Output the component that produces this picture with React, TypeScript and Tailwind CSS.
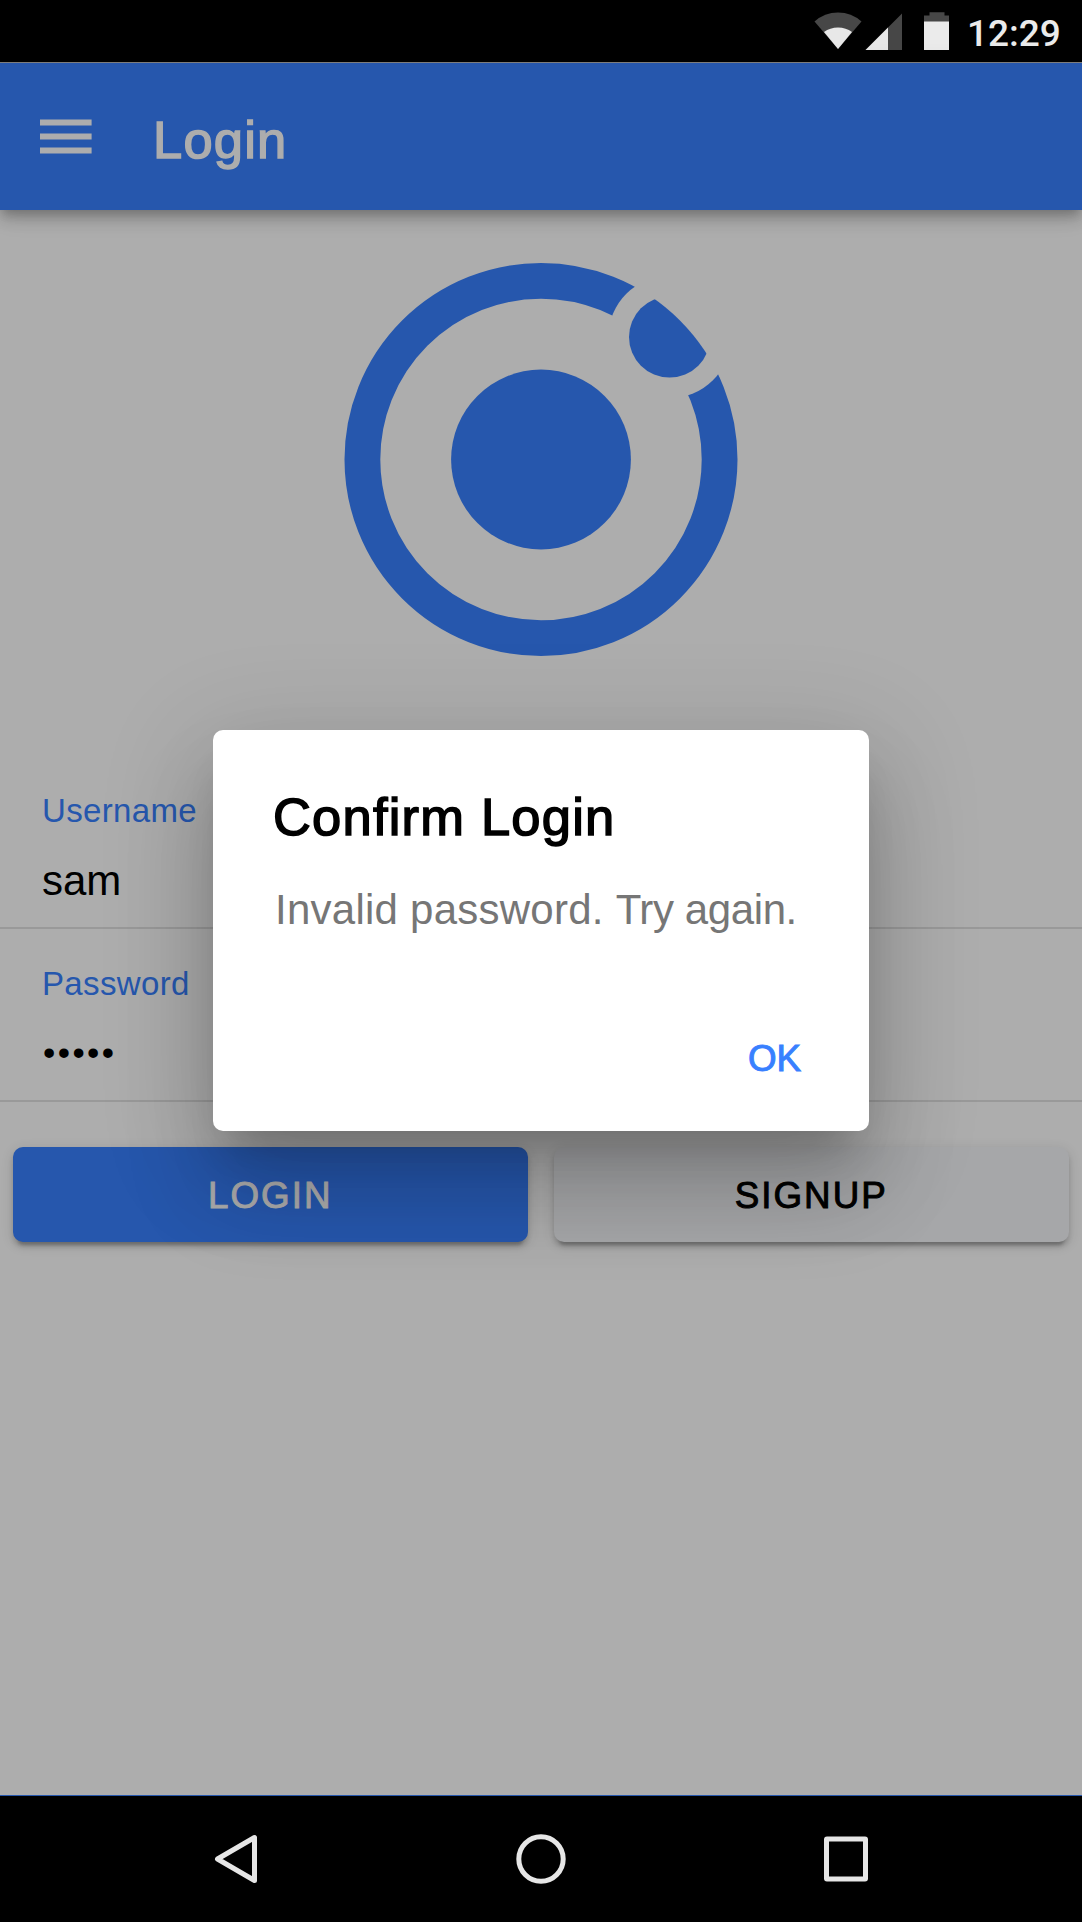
function StatusBar() {
  return (
    <div className="flex h-[62px] w-full items-start bg-black">
      <svg className="ml-auto h-[62px] w-[154px] shrink-0" viewBox="808 0 154 62">
        <path d="M838 49L814.500 21.500Q824.500 12.500 838 12.500Q851.500 12.500 861.500 21.500Z" fill="#474747" />
        <path d="M838 49L824 32Q830 27.500 838 27.500Q846 27.500 852 32Z" fill="#e8e8e8" />
        <path d="M865.500 50L902 13.500V50Z" fill="#474747" />
        <path d="M865.500 50L888 27.500V50Z" fill="#e8e8e8" />
        <path d="M924 15.500H929.500V12.300H944.500V15.500H949V22H924Z" fill="#474747" />
        <path d="M924 21.500H949V50H924Z" fill="#ebebeb" />
      </svg>
      <span className="mt-[9px] w-[120px] pl-[5px] font-['Roboto'] text-[37px] leading-[50px] font-medium text-[#ebebeb]">12:29</span>
    </div>
  );
}

function IonicLogo() {
  return (
    <svg className="mx-auto h-[394px] w-[394px]" viewBox="343.700 262.800 394 394" fill="#2657ad">
      <defs>
        <mask id="ring-gap" maskUnits="userSpaceOnUse" x="340" y="250" width="410" height="410">
          <rect x="340" y="250" width="410" height="410" fill="white" />
          <circle cx="669.300" cy="336.800" r="61.200" fill="black" />
        </mask>
        <clipPath id="ring-outer">
          <circle cx="540.700" cy="459.300" r="196.500" />
        </clipPath>
      </defs>
      <circle cx="540.700" cy="459.300" r="178.600" fill="none" stroke="#2657ad" strokeWidth="35.800" mask="url(#ring-gap)" />
      <circle cx="540.700" cy="459.300" r="89.900" />
      <circle cx="669.300" cy="336.800" r="40.600" clipPath="url(#ring-outer)" />
    </svg>
  );
}

function Field({ label, value, masked = false }: { label: string; value: string; masked?: boolean }) {
  return (
    <div className="flex h-[173px] w-full flex-col border-b-2 border-[#999999] pl-[42px]">
      <span className="mt-[35px] text-[33px] leading-[40px] tracking-[0.350px] text-[#2657ad]">{label}</span>
      {masked ? (
        <span className="mt-[26px] pl-px text-[35px] leading-[46px] tracking-[2.450px] text-black">{value}</span>
      ) : (
        <span className="mt-[25px] text-[42px] leading-[50px] text-black">{value}</span>
      )}
    </div>
  );
}

function NavBar() {
  return (
    <div className="flex h-[127px] w-full items-center justify-center border-t border-[#2657ad] bg-black">
      <svg className="h-[60px] w-[680px]" viewBox="201 1829 680 60" fill="none" stroke="#e6e6e6" strokeWidth="5">
        <path d="M254.500 1837.500V1880.500L217.500 1859Z" strokeLinejoin="round" />
        <circle cx="541" cy="1859" r="22.200" />
        <rect x="826.500" y="1839" width="39" height="40" rx="0.500" />
      </svg>
    </div>
  );
}

function AlertDialog() {
  return (
    <div className="absolute inset-0 flex items-start justify-center">
      <div
        role="alertdialog"
        className="mt-[729.500px] flex h-[401px] w-[656px] flex-col rounded-[10px] bg-white pr-[68px] pl-[61px] shadow-[0_29px_39px_-18px_rgba(0,0,0,0.2),0_63px_88px_6px_rgba(0,0,0,0.14),0_24px_104px_18px_rgba(0,0,0,0.12)]"
      >
        <h2 className="mt-[57px] -ml-px text-[52.500px] leading-[60px] tracking-[1.200px] whitespace-nowrap text-black [-webkit-text-stroke:1.500px_black]">Confirm Login</h2>
        <p className="mt-[38px] pl-px text-[42px] leading-[50px] tracking-[0.250px] whitespace-nowrap text-[#767676]">
          Invalid password. <span className="tracking-[-0.400px]">Try again.</span>
        </p>
        <button className="mt-[99px] self-end text-[36.750px] leading-[50px] text-[#3880ff] [-webkit-text-stroke:1px_#3880ff]">OK</button>
      </div>
    </div>
  );
}

export default function App() {
  return (
    <div className="relative flex h-[1922px] w-[1082px] flex-col overflow-hidden bg-[#adadad] font-['Liberation_Sans',sans-serif]">
      <StatusBar />
      <header className="flex h-[148px] w-full shrink-0 items-start border-t border-[#7d7d7d] bg-[#2657ad] shadow-[0_5px_10px_-3px_rgba(0,0,0,0.2),0_10px_13px_0_rgba(0,0,0,0.14),0_3px_26px_0_rgba(0,0,0,0.12)]">
        <svg className="mt-[53px] ml-[40px] h-[42px] w-[52px]" viewBox="0 0 52 42" fill="#adadad">
          <path d="M0 3.400H51.600V9.400H0ZM0 17.400H51.600V23.400H0ZM0 31.400H51.600V37.400H0Z" />
        </svg>
        <h1 className="mt-[47px] ml-[61px] text-[52.500px] leading-[60px] tracking-[1.200px] text-[#adadad] [-webkit-text-stroke:1.500px_#adadad]">Login</h1>
      </header>
      <main className="flex w-full grow flex-col">
        <div className="flex h-[546px] pt-[53px]">
          <IonicLogo />
        </div>
        <Field label="Username" value="sam" />
        <Field label="Password" value="•••••" masked />
        <div className="mt-[45px] flex h-[94.500px] w-full justify-between pr-[13.500px] pl-[13px]">
          <button className="w-[514.500px] rounded-[10px] bg-[#2657ad] pt-[2px] text-[36.750px] tracking-[2px] text-[#adadad] shadow-[0_8px_3px_-5px_rgba(0,0,0,0.2),0_5px_5px_0_rgba(0,0,0,0.14),0_3px_13px_0_rgba(0,0,0,0.12)] [-webkit-text-stroke:1px_#adadad]">LOGIN</button>
          <button className="w-[514.500px] rounded-[10px] bg-[#a6a7a9] pt-[2px] text-[36.750px] tracking-[2px] text-black shadow-[0_8px_3px_-5px_rgba(0,0,0,0.2),0_5px_5px_0_rgba(0,0,0,0.14),0_3px_13px_0_rgba(0,0,0,0.12)] [-webkit-text-stroke:1px_black]">SIGNUP</button>
        </div>
      </main>
      <NavBar />
      <AlertDialog />
    </div>
  );
}
